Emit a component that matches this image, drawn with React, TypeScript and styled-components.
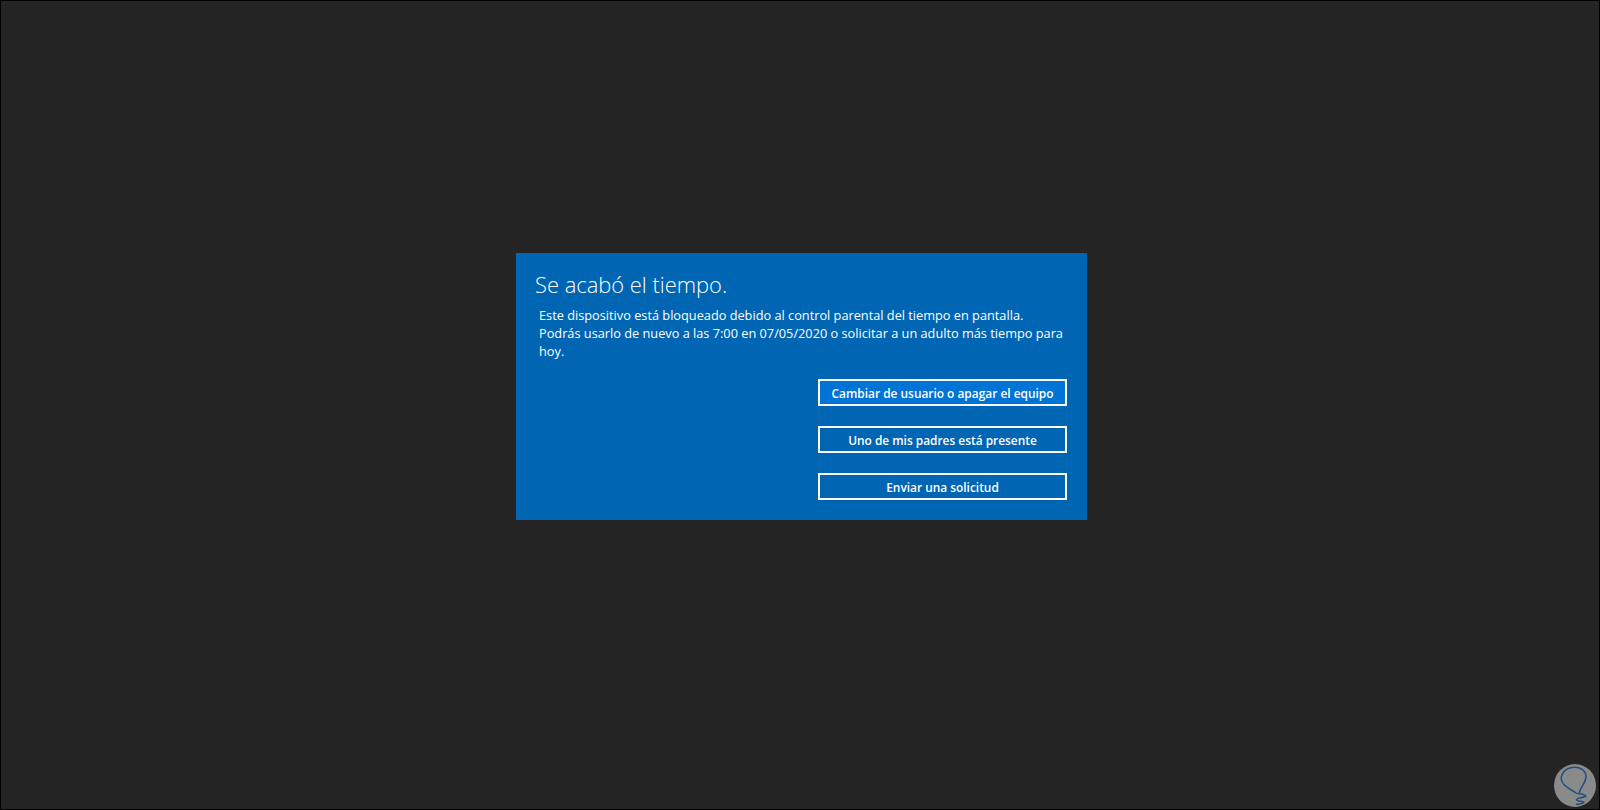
import React from "react";
import styled, { createGlobalStyle } from "styled-components";

const Global = createGlobalStyle`
  html, body { margin: 0; padding: 0; height: 100%; background: #242424; }
  #root { height: 100%; }
`;

const Screen = styled.div`
  position: relative;
  box-sizing: border-box;
  width: 1600px;
  height: 810px;
  display: flex;
  justify-content: center;
  align-items: flex-start;
  padding: 252px 0 0 3px;
  background: #242424;
  border: 1px solid #000;
  font-family: "Open Sans", "Noto Sans", "Liberation Sans", sans-serif;
  color: #fff;
`;

const Dialog = styled.section`
  box-sizing: border-box;
  width: 571px;
  height: 267px;
  padding: 15px 20px 0 19px;
  background: #0065b3;
`;

const Title = styled.h1`
  margin: 0;
  font-size: 21.9px;
  font-weight: 300;
  line-height: 34px;
`;

const Message = styled.p`
  margin: 4px 0 0;
  padding-left: 4px;
  font-size: 12.75px;
  font-weight: 400;
  line-height: 18px;
`;

const Actions = styled.div`
  display: flex;
  flex-direction: column;
  align-items: flex-end;
  gap: 20px;
  margin-top: 19px;
`;

const ActionButton = styled.button`
  box-sizing: border-box;
  width: 249px;
  height: 27px;
  padding: 2px 0 0;
  border: 2px solid #fff;
  background: #0065b3;
  color: #fff;
  font-family: inherit;
  font-size: 11.9px;
  font-weight: 600;
  line-height: 21px;
  text-align: center;
`;

const FocusedButton = styled(ActionButton)`
  background: #0074d6;
`;

const Badge = styled.svg`
  position: absolute;
  right: 3px;
  bottom: 2px;
  width: 42px;
  height: 43px;
`;

export default function App() {
  return (
    <>
      <Global />
      <Screen>
        <Dialog>
          <Title>Se acabó el tiempo.</Title>
          <Message>
            Este dispositivo está bloqueado debido al control parental del tiempo en pantalla.
            <br />
            Podrás usarlo de nuevo a las 7:00 en 07/05/2020 o solicitar a un adulto más tiempo para hoy.
          </Message>
          <Actions>
            <FocusedButton>Cambiar de usuario o apagar el equipo</FocusedButton>
            <ActionButton>Uno de mis padres está presente</ActionButton>
            <ActionButton>Enviar una solicitud</ActionButton>
          </Actions>
        </Dialog>
        <Badge viewBox="163 72 125 128" aria-hidden="true">
          <ellipse cx="225.500" cy="136" rx="62.500" ry="64" fill="#8a8a8a" />
          <path
            d="M238 160C240 140 262 125 258 105C254 85 230 78 210 84C190 90 180 110 187 125C195 142 215 148 228 158C232 163 250 158 258 168C250 172 232 172 230 178C232 186 250 180 252 186C248 192 238 190 230 192"
            fill="none"
            stroke="#1d4f80"
            strokeWidth="4.500"
            strokeLinecap="round"
            strokeLinejoin="round"
          />
        </Badge>
      </Screen>
    </>
  );
}
